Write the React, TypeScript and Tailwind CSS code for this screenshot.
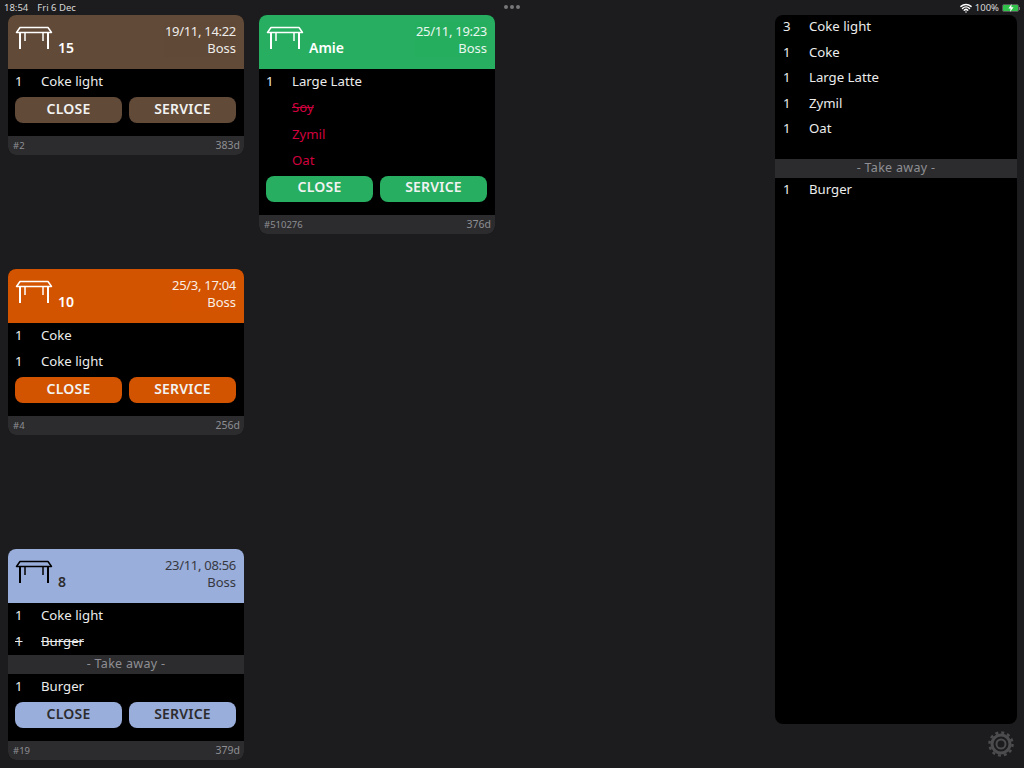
import React from 'react'
import { Wifi } from 'lucide-react'

type Item = { qty?: string; name: string; struck?: boolean; extra?: boolean; section?: string }

type Ticket = {
  color: string
  dark?: boolean
  table: string
  time: string
  items: Item[]
  id: string
  age: string
}

const columnOne: Ticket[] = [
  {
    color: 'bg-[#614a37]',
    table: '15',
    time: '19/11, 14:22',
    items: [{ qty: '1', name: 'Coke light' }],
    id: '#2',
    age: '383d',
  },
  {
    color: 'bg-[#d35400]',
    table: '10',
    time: '25/3, 17:04',
    items: [
      { qty: '1', name: 'Coke' },
      { qty: '1', name: 'Coke light' },
    ],
    id: '#4',
    age: '256d',
  },
  {
    color: 'bg-[#9aaedb]',
    dark: true,
    table: '8',
    time: '23/11, 08:56',
    items: [
      { qty: '1', name: 'Coke light' },
      { qty: '1', name: 'Burger', struck: true },
      { section: '- Take away -', name: '' },
      { qty: '1', name: 'Burger' },
    ],
    id: '#19',
    age: '379d',
  },
]

const columnTwo: Ticket = {
  color: 'bg-[#27ae60]',
  table: 'Amie',
  time: '25/11, 19:23',
  items: [
    { qty: '1', name: 'Large Latte' },
    { name: 'Soy', extra: true, struck: true },
    { name: 'Zymil', extra: true },
    { name: 'Oat', extra: true },
  ],
  id: '#510276',
  age: '376d',
}

const summary = [
  { qty: '3', name: 'Coke light' },
  { qty: '1', name: 'Coke' },
  { qty: '1', name: 'Large Latte' },
  { qty: '1', name: 'Zymil' },
  { qty: '1', name: 'Oat' },
]

function TableIcon({ className }: { className: string }) {
  return (
    <svg width="38" height="24" viewBox="0 0 38 24" fill="none" stroke="currentColor" className={className}>
      <path d="M1.5 6.5 L5 1.5 H33 L36.5 6.5 Z" strokeWidth="1.5" strokeLinejoin="round" />
      <path d="M5 6.5 V23 M33 6.5 V23" strokeWidth="2" />
      <path d="M10 6.5 V15 M28 6.5 V15" strokeWidth="1.5" />
    </svg>
  )
}

function GearIcon() {
  return (
    <svg width="28" height="28" viewBox="0 0 28 28" fill="none" stroke="#4c4c4e">
      <circle cx="14" cy="14" r="11.5" strokeWidth="2.5" strokeDasharray="3.01 3" />
      <circle cx="14" cy="14" r="9" strokeWidth="3" />
      <circle cx="14" cy="14" r="4.5" strokeWidth="2" />
    </svg>
  )
}

function SectionBar({ label }: { label: string }) {
  return (
    <div className="h-[19px] bg-[#2c2c2e] flex items-center justify-center text-[12.5px] text-[#8e8e93] tracking-[0.3px]">
      {label}
    </div>
  )
}

function TicketCard({ ticket }: { ticket: Ticket }) {
  const headText = ticket.dark ? 'text-[#2c2c2e]' : 'text-white'
  const buttonText = ticket.dark ? 'text-[#2c2c2e]' : 'text-[#f2f2f2]'
  return (
    <div className="w-[236px] rounded-lg overflow-hidden bg-black">
      <div className={`h-[54px] flex justify-between pl-[7px] pr-2 ${ticket.color} ${headText}`}>
        <div className="flex pt-[11px]">
          <TableIcon className={ticket.dark ? 'text-black' : 'text-white'} />
          <span className="ml-[5px] mt-[13px] text-[14px] leading-[18px] font-semibold">{ticket.table}</span>
        </div>
        <div className="pt-[8px] text-right text-[13px] leading-[17px] tracking-[-0.3px] opacity-90">
          <div>{ticket.time}</div>
          <div className="tracking-normal">Boss</div>
        </div>
      </div>
      <div>
        {ticket.items.map((item, i) =>
          item.section ? (
            <SectionBar key={i} label={item.section} />
          ) : (
            <div key={i} className={`flex items-center text-[13.2px] ${item.extra ? 'h-[26.33px]' : 'h-[26px]'}`}>
              <span className={`w-[33px] pl-[7px] text-[#ececec] ${item.struck && !item.extra ? 'line-through' : ''}`}>{item.qty}</span>
              <span className={`${item.extra ? 'text-[#d0003f]' : 'text-[#ececec]'} ${item.struck ? 'line-through' : ''}`}>
                {item.name}
              </span>
            </div>
          ),
        )}
      </div>
      <div className="flex justify-between pl-[7px] pr-2 pt-[2px] pb-[13px]">
        <button className={`w-[107px] h-[26px] pb-[4px] rounded-lg text-[14px] font-semibold tracking-[0.2px] ${ticket.color} ${buttonText}`}>
          CLOSE
        </button>
        <button className={`w-[107px] h-[26px] pb-[4px] rounded-lg text-[14px] font-semibold tracking-[0.2px] ${ticket.color} ${buttonText}`}>
          SERVICE
        </button>
      </div>
      <div className="h-[19px] pt-[1px] bg-[#2c2c2e] flex items-center justify-between pl-[5px] pr-1 text-[#8e8e93]">
        <span className="text-[9.5px]">{ticket.id}</span>
        <span className="text-[10.5px]">{ticket.age}</span>
      </div>
    </div>
  )
}

export default function App() {
  return (
    <div className="w-[1024px] h-[768px] overflow-hidden bg-[#1c1c1e] font-['Noto_Sans',sans-serif]">
      {/* status bar */}
      <div className="h-[15px] relative flex items-center justify-between pl-1 pr-1 pt-[1px] text-[9.5px] text-[#d8d8d8]">
        <div className="flex gap-[9px]">
          <span>18:54</span>
          <span>Fri 6 Dec</span>
        </div>
        <div className="absolute left-[504px] top-[5px] flex gap-[2px]">
          <span className="w-1 h-1 rounded-full bg-[#77777a]" />
          <span className="w-1 h-1 rounded-full bg-[#77777a]" />
          <span className="w-1 h-1 rounded-full bg-[#77777a]" />
        </div>
        <div className="flex items-center gap-[3px]">
          <Wifi size={12} strokeWidth={3} className="text-white" />
          <span>100%</span>
          <div className="flex items-center">
            <div className="w-[17px] h-[8px] rounded-[2px] bg-[#30c24a] border border-[#555] flex items-center justify-center">
              <svg width="6" height="8" viewBox="0 0 6 8" fill="white">
                <path d="M3.6 0 L0.4 4.5 H2.6 L2 8 L5.6 3.2 H3.3 Z" />
              </svg>
            </div>
            <span className="w-[1px] h-[3px] bg-[#777]" />
          </div>
        </div>
      </div>

      <div className="flex">
        <div className="ml-2 flex flex-col gap-[114px]">
          {columnOne.map((ticket) => (
            <TicketCard key={ticket.id} ticket={ticket} />
          ))}
        </div>
        <div className="ml-[15px]">
          <TicketCard ticket={columnTwo} />
        </div>

        <div className="ml-auto mr-[7px] w-[242px]">
          <div className="h-[709px] rounded-lg bg-black">
            <div className="pb-[16.5px]">
              {summary.map((row) => (
                <div key={row.name} className="h-[25.5px] pb-[1px] flex items-center text-[13.2px] text-[#ececec]">
                  <span className="w-[34px] pl-2">{row.qty}</span>
                  <span>{row.name}</span>
                </div>
              ))}
            </div>
            <SectionBar label="- Take away -" />
            <div className="h-[23px] flex items-center text-[13.2px] text-[#ececec]">
              <span className="w-[34px] pl-2">1</span>
              <span>Burger</span>
            </div>
          </div>
          <div className="flex justify-end pt-[6px] pr-[2px]">
            <GearIcon />
          </div>
        </div>
      </div>
    </div>
  )
}
